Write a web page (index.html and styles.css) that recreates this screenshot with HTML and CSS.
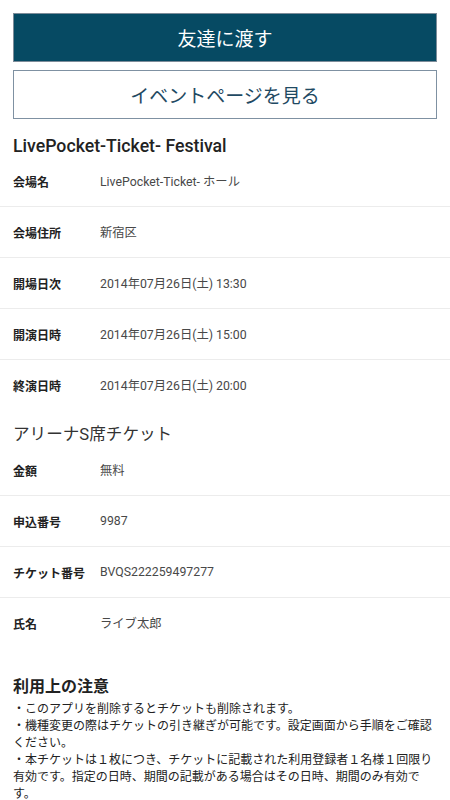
FILE: index.html
```html
<!DOCTYPE html>
<html lang="ja">
<head>
    <meta charset="UTF-8">
    <meta name="viewport" content="width=device-width, initial-scale=1.0">
    <title>チケット詳細</title>
    <link rel="stylesheet" href="styles.css">
</head>
<body>
    <div class="actions">
        <button class="btn btn-primary">友達に渡す</button>
        <button class="btn btn-outline">イベントページを見る</button>
    </div>

    <h2 class="event-title">LivePocket-Ticket- Festival</h2>
    <dl class="info">
        <div class="row"><dt>会場名</dt><dd>LivePocket-Ticket- ホール</dd></div>
        <div class="row"><dt>会場住所</dt><dd>新宿区</dd></div>
        <div class="row"><dt>開場日次</dt><dd>2014年07月26日(土) 13:30</dd></div>
        <div class="row"><dt>開演日時</dt><dd>2014年07月26日(土) 15:00</dd></div>
        <div class="row"><dt>終演日時</dt><dd>2014年07月26日(土) 20:00</dd></div>
    </dl>

    <h2 class="ticket-title">アリーナS席チケット</h2>
    <dl class="info">
        <div class="row"><dt>金額</dt><dd>無料</dd></div>
        <div class="row"><dt>申込番号</dt><dd>9987</dd></div>
        <div class="row"><dt>チケット番号</dt><dd>BVQS222259497277</dd></div>
        <div class="row"><dt>氏名</dt><dd>ライブ太郎</dd></div>
    </dl>

    <h2 class="notes-title">利用上の注意</h2>
    <div class="notes">
        <p>・このアプリを削除するとチケットも削除されます。</p>
        <p>・機種変更の際はチケットの引き継ぎが可能です。設定画面から手順をご確認ください。</p>
        <p>・本チケットは１枚につき、チケットに記載された利用登録者１名様１回限り有効です。指定の日時、期間の記載がある場合はその日時、期間のみ有効です。</p>
        <p>・入場時にチケットが表示できない、著しく読み取り・認証操作が困難と判断された場合は、入場をお断りする場合がございます。</p>
    </div>
</body>
</html>
```

FILE: styles.css
```css
body {
    margin: 0;
    padding: 13px 0 0;
    background: #fff;
    font-family: Roboto, "Noto Sans CJK JP", sans-serif;
    color: #222;
}
.actions {
    display: flex;
    flex-direction: column;
    gap: 8px;
    padding: 0 13px;
}
.btn {
    height: 49px;
    font-family: Roboto, "Noto Sans CJK JP", sans-serif;
    font-size: 19px;
    border-radius: 0;
    cursor: pointer;
}
.btn-primary {
    background: #064a63;
    color: #fff;
    border: 1px solid #7d8c99;
}
.btn-outline {
    background: #fff;
    color: #1f4a63;
    border: 1px solid #7f91a2;
}
.event-title,
.ticket-title,
.notes-title {
    margin: 0;
    padding: 0 13px;
    line-height: 20px;
}
.event-title {
    margin-top: 17px;
    font-size: 17.7px;
    font-weight: 500;
}
.ticket-title {
    margin-top: 15px;
    font-size: 16.6px;
    font-weight: normal;
    color: #333;
}
.notes-title {
    margin-top: 29px;
    font-size: 16px;
    font-weight: bold;
}
.info {
    margin: 0;
}
.row {
    display: flex;
    align-items: center;
    height: 50px;
    padding: 0 13px;
    font-size: 12px;
    border-bottom: 1px solid #ececec;
}
.row:last-child {
    border-bottom: none;
}
.row dt {
    width: 87px;
    flex-shrink: 0;
    font-weight: bold;
    color: #222;
}
.row dd {
    margin: 0;
    font-size: 12.3px;
    color: #484848;
}
.notes {
    padding: 4px 13px 0;
    font-size: 12px;
    line-height: 17px;
    color: #222;
}
.notes p {
    margin: 0;
}
```
